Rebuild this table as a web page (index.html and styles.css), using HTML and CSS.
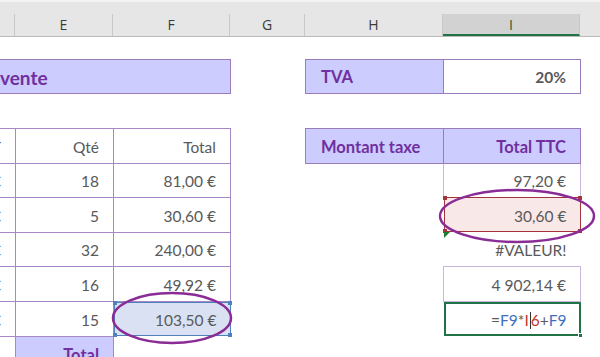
FILE: index.html
```html
<!DOCTYPE html>
<html>
<head>
<meta charset="utf-8">
<link rel="stylesheet" href="styles.css">
</head>
<body>
<div class="page">
  <div class="colhead">
    <div class="ch c-d"></div>
    <div class="ch c-e">E</div>
    <div class="ch c-f">F</div>
    <div class="ch c-g">G</div>
    <div class="ch c-h">H</div>
    <div class="ch c-i sel">I</div>
    <div class="ch c-j"></div>
  </div>
  <table class="sheet">
    <colgroup>
      <col class="w-d"><col class="w-e"><col class="w-f"><col class="w-g"><col class="w-h"><col class="w-i"><col class="w-j">
    </colgroup>
    <tr class="r2"><td></td><td></td><td></td><td></td><td></td><td></td><td></td></tr>
    <tr class="r34">
      <td colspan="3" class="title"><span class="title-txt">vente</span></td>
      <td></td>
      <td class="hd box-dark lbl">TVA</td>
      <td class="box-dark num bold">20%</td>
      <td></td>
    </tr>
    <tr class="r35"><td></td><td></td><td></td><td></td><td></td><td></td><td></td></tr>
    <tr class="r35">
      <td class="b num">P.U. HT</td>
      <td class="b num">Qté</td>
      <td class="b num">Total</td>
      <td></td>
      <td class="hd box-dark lbl">Montant taxe</td>
      <td class="hd box-dark num">Total TTC</td>
      <td></td>
    </tr>
    <tr class="r34">
      <td class="b num">4,50 €</td>
      <td class="b num">18</td>
      <td class="b num">81,00 €</td>
      <td></td><td></td>
      <td class="side num">97,20 €</td>
      <td></td>
    </tr>
    <tr class="r35">
      <td class="b num">6,12 €</td>
      <td class="b num">5</td>
      <td class="b num">30,60 €</td>
      <td></td><td></td>
      <td class="num selpink"><span class="hdl tl"></span><span class="hdl tr"></span><span class="hdl bl"></span><span class="hdl br"></span>30,60 €</td>
      <td></td>
    </tr>
    <tr class="r34">
      <td class="b num">7,50 €</td>
      <td class="b num">32</td>
      <td class="b num">240,00 €</td>
      <td></td><td></td>
      <td class="num err"><span class="tri"></span>#VALEUR!</td>
      <td></td>
    </tr>
    <tr class="r35">
      <td class="b num">3,12 €</td>
      <td class="b num">16</td>
      <td class="b num">49,92 €</td>
      <td></td><td></td>
      <td class="light num">4 902,14 €</td>
      <td></td>
    </tr>
    <tr class="r35">
      <td class="b num">6,90 €</td>
      <td class="b num">15</td>
      <td class="num selblue"><span class="hdl tl"></span><span class="hdl tr"></span><span class="hdl bl"></span><span class="hdl br"></span>103,50 €</td>
      <td></td><td></td>
      <td class="num edit"><span class="op">=</span><span class="ref-b">F9</span><span class="op">*</span><span class="ref-r">I</span><span class="caret"></span><span class="ref-r">6</span><span class="op">+</span><span class="ref-b">F9</span><span class="ghdl"></span></td>
      <td></td>
    </tr>
    <tr class="r35">
      <td></td>
      <td class="hd b num">Total</td>
      <td></td><td></td><td></td><td></td><td></td>
    </tr>
  </table>
  <svg class="marks" width="600" height="357" viewBox="0 0 600 357">
    <ellipse cx="517" cy="216" rx="77" ry="26" fill="none" stroke="#8a2c96" stroke-width="2.5"/>
    <ellipse cx="172" cy="318" rx="59" ry="25" fill="none" stroke="#8a2c96" stroke-width="2.5"/>
  </svg>
</div>
</body>
</html>
```
FILE: styles.css
```css
* { box-sizing: border-box; }
html, body { margin: 0; padding: 0; background: #fff; }
body { width: 600px; height: 357px; overflow: hidden; }
.page { position: relative; width: 600px; height: 357px; overflow: hidden; font-family: Lato, "Open Sans", sans-serif; }

.colhead {
  display: flex;
  margin-left: -85px;
  height: 37px;
  background: #e6e6e6;
  border-top: 2px solid #f3f3f3;
  border-bottom: 1px solid #bababa;
  padding-top: 12px;
}
.ch {
  flex: none;
  height: 22px;
  border-right: 1px solid #c8c8c8;
  text-align: center;
  font-family: "Open Sans", "Noto Sans", sans-serif;
  font-size: 14px;
  line-height: 22px;
  color: #3a3a3a;
}
.c-d { width: 100px; }
.c-e { width: 98px; }
.c-f { width: 117px; }
.c-g { width: 75px; }
.c-h { width: 138px; }
.c-i { width: 137px; }
.c-j { width: 50px; border-right: none; }
.ch.sel { background: #d2d2d2; border-bottom: 2px solid #217346; color: #215d3a; }

.sheet {
  margin-left: -85px;
  border-collapse: collapse;
  table-layout: fixed;
  width: 615px;
}
.w-d { width: 100px; }
.w-e { width: 98px; }
.w-f { width: 117px; }
.w-g { width: 75px; }
.w-h { width: 138px; }
.w-i { width: 137px; }
.w-j { width: 50px; }
.sheet td {
  padding: 2px 14px 0 14px;
  font-size: 15.5px;
  color: #595959;
  white-space: nowrap;
  overflow: visible;
  vertical-align: middle;
}
.r2 td { height: 22px; }
.r34 td { height: 34px; }
.r35 td { height: 35px; }

.num { text-align: right; }
.bold { font-weight: 700; }
.b { border: 1px solid #a688c6; }
.hd { background: #ccccff; color: #7030a0 !important; font-weight: 700; font-size: 16.5px !important; }
.box-dark { border: 1px solid #9b7cbb; }
.lbl { text-align: left; padding-left: 15px !important; }

.title {
  background: #ccccff;
  border: 1px solid #9b7cbb;
  color: #7030a0 !important;
  font-weight: 700;
  font-size: 19px !important;
  overflow: hidden;
}
.title-txt { display: block; text-align: left; margin-left: 70px; }

.side { border-left: 1px solid #c9b6de; border-right: 1px solid #c9b6de; }
.light { border: 1px solid #c9b6de; }

.selpink, .selblue, .edit, .err { position: relative; }
.selpink { background: #f9e8e8; box-shadow: inset 0 0 0 1px #a3343b; }
.selblue { background: #d9e1f2; box-shadow: inset 0 0 0 1px #4f81bd; }
.edit { box-shadow: inset 0 0 0 2px #217346; }

.hdl { position: absolute; width: 4px; height: 4px; }
.selpink .hdl { background: #a3343b; }
.selblue .hdl { background: #4f81bd; }
.hdl.tl { left: -1px; top: -1px; }
.hdl.tr { right: -1px; top: -1px; }
.hdl.bl { left: -1px; bottom: -1px; }
.hdl.br { right: -1px; bottom: -1px; }

.tri {
  position: absolute;
  left: 0;
  top: 0;
  width: 0;
  height: 0;
  border-top: 6px solid #1e7b34;
  border-right: 6px solid transparent;
}

.op { color: #595959; }
.ref-b { color: #3c6fc2; }
.ref-r { color: #c0392b; }
.caret { display: inline-block; width: 1px; height: 17px; background: #333; vertical-align: -3px; margin: 0 0 0 1px; }
.ghdl { position: absolute; right: -2px; bottom: -2px; width: 5px; height: 5px; background: #217346; border: 1px solid #fff; }

.marks { position: absolute; left: 0; top: 0; pointer-events: none; }
```
